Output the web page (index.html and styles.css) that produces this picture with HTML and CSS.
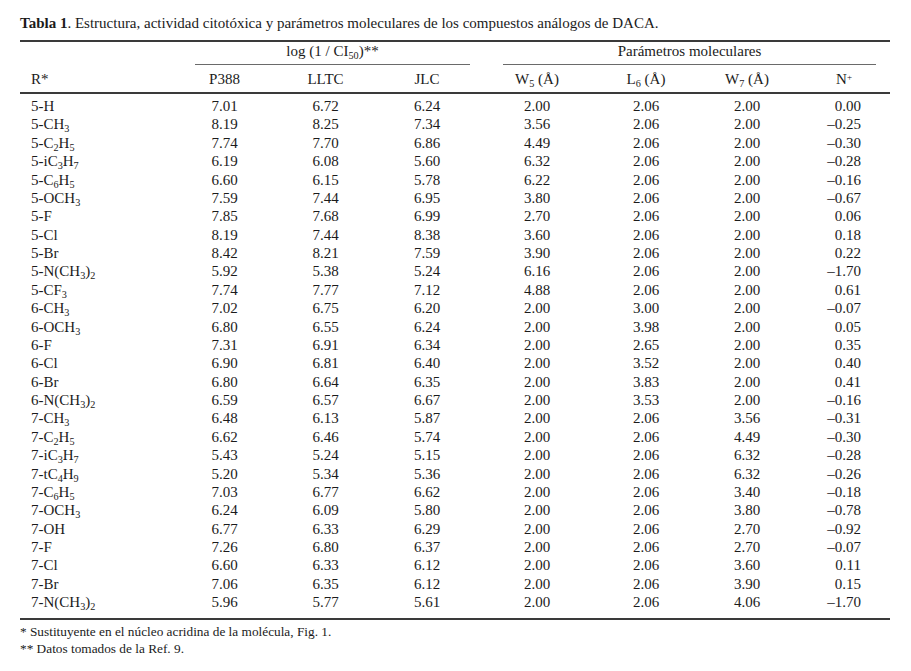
FILE: index.html
```html
<!DOCTYPE html>
<html lang="es">
<head>
<meta charset="utf-8">
<title>Tabla 1</title>
<link rel="stylesheet" href="styles.css">
</head>
<body>
<div class="page">
  <p class="caption"><b>Tabla 1</b>. Estructura, actividad citotóxica y parámetros moleculares de los compuestos análogos de DACA.</p>
  <table class="data">
    <colgroup>
      <col class="c-r"><col class="c-p"><col class="c-l"><col class="c-j">
      <col class="c-w5"><col class="c-l6"><col class="c-w7"><col class="c-n">
    </colgroup>
    <thead>
      <tr class="span-row">
        <th></th>
        <th colspan="3"><div class="spanner sp-log">log (1 / CI<sub>50</sub>)**</div></th>
        <th colspan="4"><div class="spanner sp-par">Parámetros moleculares</div></th>
      </tr>
      <tr class="col-row">
        <th class="r">R*</th>
        <th>P388</th>
        <th>LLTC</th>
        <th>JLC</th>
        <th>W<sub>5</sub> (Å)</th>
        <th>L<sub>6</sub> (Å)</th>
        <th>W<sub>7</sub> (Å)</th>
        <th class="n">N<sup>+</sup></th>
      </tr>
    </thead>
    <tbody>
      <tr><td class="r">5-H</td><td>7.01</td><td>6.72</td><td>6.24</td><td>2.00</td><td>2.06</td><td>2.00</td><td class="n">0.00</td></tr>
      <tr><td class="r">5-CH<sub>3</sub></td><td>8.19</td><td>8.25</td><td>7.34</td><td>3.56</td><td>2.06</td><td>2.00</td><td class="n">–0.25</td></tr>
      <tr><td class="r">5-C<sub>2</sub>H<sub>5</sub></td><td>7.74</td><td>7.70</td><td>6.86</td><td>4.49</td><td>2.06</td><td>2.00</td><td class="n">–0.30</td></tr>
      <tr><td class="r">5-iC<sub>3</sub>H<sub>7</sub></td><td>6.19</td><td>6.08</td><td>5.60</td><td>6.32</td><td>2.06</td><td>2.00</td><td class="n">–0.28</td></tr>
      <tr><td class="r">5-C<sub>6</sub>H<sub>5</sub></td><td>6.60</td><td>6.15</td><td>5.78</td><td>6.22</td><td>2.06</td><td>2.00</td><td class="n">–0.16</td></tr>
      <tr><td class="r">5-OCH<sub>3</sub></td><td>7.59</td><td>7.44</td><td>6.95</td><td>3.80</td><td>2.06</td><td>2.00</td><td class="n">–0.67</td></tr>
      <tr><td class="r">5-F</td><td>7.85</td><td>7.68</td><td>6.99</td><td>2.70</td><td>2.06</td><td>2.00</td><td class="n">0.06</td></tr>
      <tr><td class="r">5-Cl</td><td>8.19</td><td>7.44</td><td>8.38</td><td>3.60</td><td>2.06</td><td>2.00</td><td class="n">0.18</td></tr>
      <tr><td class="r">5-Br</td><td>8.42</td><td>8.21</td><td>7.59</td><td>3.90</td><td>2.06</td><td>2.00</td><td class="n">0.22</td></tr>
      <tr><td class="r">5-N(CH<sub>3</sub>)<sub>2</sub></td><td>5.92</td><td>5.38</td><td>5.24</td><td>6.16</td><td>2.06</td><td>2.00</td><td class="n">–1.70</td></tr>
      <tr><td class="r">5-CF<sub>3</sub></td><td>7.74</td><td>7.77</td><td>7.12</td><td>4.88</td><td>2.06</td><td>2.00</td><td class="n">0.61</td></tr>
      <tr><td class="r">6-CH<sub>3</sub></td><td>7.02</td><td>6.75</td><td>6.20</td><td>2.00</td><td>3.00</td><td>2.00</td><td class="n">–0.07</td></tr>
      <tr><td class="r">6-OCH<sub>3</sub></td><td>6.80</td><td>6.55</td><td>6.24</td><td>2.00</td><td>3.98</td><td>2.00</td><td class="n">0.05</td></tr>
      <tr><td class="r">6-F</td><td>7.31</td><td>6.91</td><td>6.34</td><td>2.00</td><td>2.65</td><td>2.00</td><td class="n">0.35</td></tr>
      <tr><td class="r">6-Cl</td><td>6.90</td><td>6.81</td><td>6.40</td><td>2.00</td><td>3.52</td><td>2.00</td><td class="n">0.40</td></tr>
      <tr><td class="r">6-Br</td><td>6.80</td><td>6.64</td><td>6.35</td><td>2.00</td><td>3.83</td><td>2.00</td><td class="n">0.41</td></tr>
      <tr><td class="r">6-N(CH<sub>3</sub>)<sub>2</sub></td><td>6.59</td><td>6.57</td><td>6.67</td><td>2.00</td><td>3.53</td><td>2.00</td><td class="n">–0.16</td></tr>
      <tr><td class="r">7-CH<sub>3</sub></td><td>6.48</td><td>6.13</td><td>5.87</td><td>2.00</td><td>2.06</td><td>3.56</td><td class="n">–0.31</td></tr>
      <tr><td class="r">7-C<sub>2</sub>H<sub>5</sub></td><td>6.62</td><td>6.46</td><td>5.74</td><td>2.00</td><td>2.06</td><td>4.49</td><td class="n">–0.30</td></tr>
      <tr><td class="r">7-iC<sub>3</sub>H<sub>7</sub></td><td>5.43</td><td>5.24</td><td>5.15</td><td>2.00</td><td>2.06</td><td>6.32</td><td class="n">–0.28</td></tr>
      <tr><td class="r">7-tC<sub>4</sub>H<sub>9</sub></td><td>5.20</td><td>5.34</td><td>5.36</td><td>2.00</td><td>2.06</td><td>6.32</td><td class="n">–0.26</td></tr>
      <tr><td class="r">7-C<sub>6</sub>H<sub>5</sub></td><td>7.03</td><td>6.77</td><td>6.62</td><td>2.00</td><td>2.06</td><td>3.40</td><td class="n">–0.18</td></tr>
      <tr><td class="r">7-OCH<sub>3</sub></td><td>6.24</td><td>6.09</td><td>5.80</td><td>2.00</td><td>2.06</td><td>3.80</td><td class="n">–0.78</td></tr>
      <tr><td class="r">7-OH</td><td>6.77</td><td>6.33</td><td>6.29</td><td>2.00</td><td>2.06</td><td>2.70</td><td class="n">–0.92</td></tr>
      <tr><td class="r">7-F</td><td>7.26</td><td>6.80</td><td>6.37</td><td>2.00</td><td>2.06</td><td>2.70</td><td class="n">–0.07</td></tr>
      <tr><td class="r">7-Cl</td><td>6.60</td><td>6.33</td><td>6.12</td><td>2.00</td><td>2.06</td><td>3.60</td><td class="n">0.11</td></tr>
      <tr><td class="r">7-Br</td><td>7.06</td><td>6.35</td><td>6.12</td><td>2.00</td><td>2.06</td><td>3.90</td><td class="n">0.15</td></tr>
      <tr><td class="r">7-N(CH<sub>3</sub>)<sub>2</sub></td><td>5.96</td><td>5.77</td><td>5.61</td><td>2.00</td><td>2.06</td><td>4.06</td><td class="n">–1.70</td></tr>
    </tbody>
  </table>
  <div class="notes">
    <p>* Sustituyente en el núcleo acridina de la molécula, Fig. 1.</p>
    <p>** Datos tomados de la Ref. 9.</p>
  </div>
</div>
</body>
</html>
```

FILE: styles.css
```css
html, body {
  margin: 0;
  padding: 0;
  background: #ffffff;
}

.page {
  padding: 14px 21px 0 20px;
  font-family: "Liberation Serif", "Times New Roman", serif;
  color: #1b1b1b;
}

.caption {
  margin: 0;
  font-size: 15px;
  line-height: 18px;
  white-space: nowrap;
}

.caption b {
  font-weight: bold;
}

.data {
  margin-top: 8px;
  width: 870px;
  table-layout: fixed;
  border-collapse: separate;
  border-spacing: 0;
  font-size: 15px;
}

.c-r { width: 154px; }
.c-p { width: 101px; }
.c-l { width: 101px; }
.c-j { width: 102px; }
.c-w5 { width: 118px; }
.c-l6 { width: 100px; }
.c-w7 { width: 102px; }
.c-n { width: 92px; }

.data th {
  font-weight: normal;
  padding: 0;
  text-align: center;
  line-height: 18px;
}

.span-row th {
  border-top: 2px solid #3a3a3a;
}

.spanner {
  padding-bottom: 4px;
  border-bottom: 1px solid #6a6a6a;
}

.sp-log {
  margin: 0 8px 0 21px;
}

.sp-par {
  margin: 0 14px 0 25px;
}

.col-row th {
  padding: 5px 0 4px;
  border-bottom: 2px solid #3a3a3a;
}

.data td {
  padding: 0;
  text-align: center;
  line-height: 18.37px;
  white-space: nowrap;
}

.data .r {
  text-align: left;
  padding-left: 11px;
}

.data td.n {
  text-align: right;
  padding-right: 29px;
}

.data th.n {
  text-align: right;
  padding-right: 38px;
}

.data tbody tr:first-child td {
  padding-top: 3px;
}

.data tbody tr:last-child td {
  padding-bottom: 6px;
  border-bottom: 2px solid #3a3a3a;
}

sub {
  font-size: 0.68em;
  line-height: 0;
  vertical-align: -0.3em;
}

sup {
  font-size: 0.6em;
  line-height: 0;
  vertical-align: 0.45em;
}

.notes {
  margin-top: 3px;
  font-size: 13.3px;
  line-height: 17px;
}

.notes p {
  margin: 0;
}
```
